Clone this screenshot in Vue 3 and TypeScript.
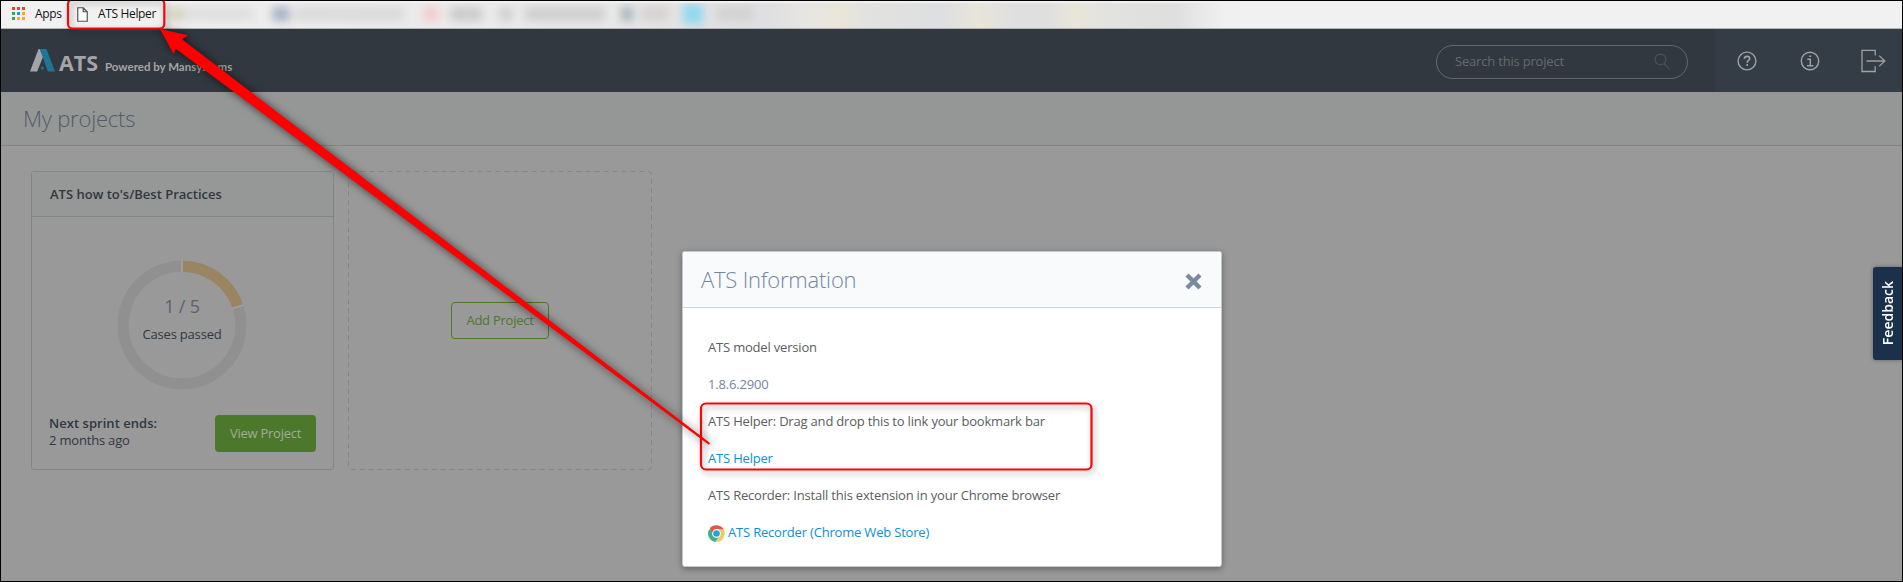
<script setup lang="ts">
interface Smudge { cx: number; w: number; color: string }
interface InfoRow { text: string; kind: 'label' | 'value' | 'link' | 'store' }

const appDots: string[] = ['#ea4335', '#ea4335', '#ea4335', '#34a853', '#2f8af5', '#fbab12', '#34a853', '#fbab12', '#fbab12']

const smudges: Smudge[] = [
  { cx: 177, w: 16, color: '#d6d2b8' },
  { cx: 218, w: 70, color: '#dfdfe0' },
  { cx: 281, w: 17, color: '#a3b1c3' },
  { cx: 350, w: 110, color: '#dadadb' },
  { cx: 431, w: 14, color: '#f5c8c8' },
  { cx: 466, w: 32, color: '#cbcbcb' },
  { cx: 506, w: 14, color: '#d0d0d0' },
  { cx: 565, w: 80, color: '#cfcfd0' },
  { cx: 627, w: 11, color: '#9fb0b8' },
  { cx: 655, w: 28, color: '#d6d1d0' },
  { cx: 735, w: 36, color: '#d2d2d3' },
]

const rows: InfoRow[] = [
  { text: 'ATS model version', kind: 'label' },
  { text: '1.8.6.2900', kind: 'value' },
  { text: 'ATS Helper: Drag and drop this to link your bookmark bar', kind: 'label' },
  { text: 'ATS Helper', kind: 'link' },
  { text: 'ATS Recorder: Install this extension in your Chrome browser', kind: 'label' },
  { text: 'ATS Recorder (Chrome Web Store)', kind: 'store' },
]
</script>

<template>
  <div class="screen">
    <div class="bookmarks">
      <svg class="smudges" width="1240" height="27" viewBox="0 0 1240 27">
        <defs>
          <filter id="soft" filterUnits="userSpaceOnUse" x="160" y="2" width="1080" height="25"><feGaussianBlur stdDeviation="5" /></filter>
          <linearGradient id="strip" x1="0" x2="1">
            <stop offset="0" stop-color="#efeeef" /><stop offset=".4" stop-color="#e9e9e9" />
            <stop offset=".5" stop-color="#e2e2e3" /><stop offset=".56" stop-color="#dfdfe1" />
            <stop offset=".595" stop-color="#e6e5e2" /><stop offset=".628" stop-color="#e9e6d8" />
            <stop offset=".65" stop-color="#e2e2e0" /><stop offset=".725" stop-color="#dedfe0" />
            <stop offset=".755" stop-color="#e8e5d9" /><stop offset=".79" stop-color="#dfdfdf" />
            <stop offset=".82" stop-color="#dfdfdf" /><stop offset=".845" stop-color="#e8e5d9" />
            <stop offset=".88" stop-color="#e2e2e0" /><stop offset=".94" stop-color="#dfdfdf" />
            <stop offset=".985" stop-color="#f0f0f0" />
          </linearGradient>
        </defs>
        <rect x="168" y="2" width="1072" height="25" fill="url(#strip)" />
        <g filter="url(#soft)">
          <rect v-for="s in smudges" :key="s.cx" :x="s.cx - s.w / 2" y="6" :width="s.w" height="14" :fill="s.color" />
          <rect x="683" y="3" width="20" height="20" fill="#8fd8f0" />
        </g>
      </svg>
      <div class="dots"><i v-for="(c, i) in appDots" :key="i" :style="{ background: c }"></i></div>
      <span class="apps">Apps</span>
      <svg class="doc" width="11" height="15" viewBox="0 0 11 15">
        <path d="M.75.75h5.5l4 4v9.5H.75zM6.25.75v4h4" fill="#fafafa" stroke="#555" stroke-width="1.2" />
      </svg>
      <span class="helper">ATS Helper</span>
    </div>

    <header class="topbar">
      <div class="brand">
        <svg width="25" height="23" viewBox="0 0 25 23">
          <path d="M8.5 0h3.3L14 5.2 7.2 22.5H0z" fill="#a3a5a7" />
          <path d="M9.5 0h7L25 22.5h-7.2L12 6.2z" fill="#1f7596" />
          <circle cx="12.3" cy="19" r="1.5" fill="#1f7596" />
        </svg>
        <span class="ats">ATS</span>
        <span class="powered">Powered by Mansystems</span>
      </div>
      <div class="search">
        <span>Search this project</span>
        <svg width="17" height="18" viewBox="0 0 17 18" fill="none" stroke="#4a525a" stroke-width="1.2">
          <circle cx="6.5" cy="6.5" r="5.4" /><path d="M10.3 10.6l5.5 6" />
        </svg>
      </div>
      <div class="tools">
        <svg class="q" width="20" height="20" viewBox="0 0 20 20" fill="none" stroke="#a0a2a4" stroke-width="1.4">
          <circle cx="10" cy="10" r="8.9" />
          <path d="M7.4 7.7c.1-3.2 5.3-3 5.3-.1 0 1.9-2.5 1.9-2.5 4.1M10.2 13.1v1.9" stroke-width="1.6" />
        </svg>
        <svg class="i" width="20" height="20" viewBox="0 0 20 20" fill="none" stroke="#a0a2a4" stroke-width="1.4">
          <circle cx="10" cy="10" r="8.7" />
          <path d="M7.3 8.3h3v6.4M7 14.8h6.4M9.2 5.3h2" />
        </svg>
        <svg class="out" width="25" height="24" viewBox="0 0 25 24" fill="none" stroke="#a0a09c" stroke-width="1.3">
          <path d="M14.2 6.5V1.3H1v21.2h13.2v-5.2M5.5 12h18M18.2 6.6l5.6 5.4-5.6 5.4" />
        </svg>
      </div>
    </header>

    <div class="heading"><h1>My projects</h1></div>

    <main class="projects">
      <section class="card">
        <h2>ATS how to's/Best Practices</h2>
        <div class="chart">
          <svg width="130" height="130" viewBox="0 0 130 130">
            <circle cx="65" cy="65" r="58.8" fill="none" stroke="#909090" stroke-width="11" />
            <circle cx="65" cy="65" r="58.8" fill="none" stroke="#9b8561" stroke-width="11" pathLength="100" stroke-dasharray="20 80" transform="rotate(-90 65 65)" />
            <path d="M65 13V0M114.5 48.9l12.4-4" stroke="#a0a0a0" stroke-width="1.8" />
          </svg>
          <div class="score"><strong>1 / 5</strong><span>Cases passed</span></div>
        </div>
        <footer>
          <p><b>Next sprint ends:</b><br />2 months ago</p>
          <button class="view">View Project</button>
        </footer>
      </section>
      <section class="blank">
        <svg class="dashes" width="304" height="299"><rect x=".5" y=".5" width="303" height="298" rx="3" /></svg>
        <button class="add">Add Project</button>
      </section>
    </main>

    <div class="modal">
      <div class="modal-head">
        <h3>ATS Information</h3>
        <svg width="17" height="17" viewBox="0 0 17 17"><path d="M2 2l13 13M15 2L2 15" stroke="#788ba3" stroke-width="4.4" /></svg>
      </div>
      <div class="modal-body">
        <div v-for="row in rows" :key="row.text" class="row" :class="row.kind">
          <svg v-if="row.kind === 'store'" width="17" height="17" viewBox="0 0 34 34">
            <path d="M17 17L2.3 8.5A17 17 0 0 0 15 34L24 21z" fill="#3fb192" />
            <path d="M24 21L15.5 34A17 17 0 0 0 32 10H17z" fill="#f2cb61" />
            <path d="M3.5 6.5A17 17 0 0 1 31.5 9H17L9.5 18z" fill="#e0574a" />
            <circle cx="17" cy="17" r="8.8" fill="#fff" /><circle cx="17" cy="17" r="6.6" fill="#2aa3d8" />
          </svg>
          <span>{{ row.text }}</span>
        </div>
      </div>
    </div>

    <div class="feedback"><span>Feedback</span></div>

    <svg class="marks" width="1903" height="582" viewBox="0 0 1903 582">
      <g class="boxes" fill="none" stroke="#f60808" stroke-width="2.2">
        <rect x="68" y="-.5" width="96.3" height="29" rx="4.5" />
        <rect x="701" y="403.5" width="390.5" height="66" rx="5" />
      </g>
      <path class="arrow" d="M160 29L188 35.2L182 39.3L710 443L708.8 444.8L175.7 48.7L173.7 54.2z" fill="#f00" />
    </svg>
    <div class="frame"></div>
  </div>
</template>

<style>
html, body { margin: 0; overflow: hidden; background: #999; }
</style>

<style scoped>
.screen { position: relative; width: 1903px; height: 582px; overflow: hidden; background: #999; font-family: "Open Sans", "Noto Sans", sans-serif; font-size: 13px; line-height: 18px; letter-spacing: -.19px; color: #31373f; }
.frame { position: absolute; inset: 0; border: 1px solid #000; }
.marks { position: absolute; left: 0; top: 0; }
.boxes { filter: drop-shadow(2px 3px 3px rgba(0, 0, 0, .35)); }
.arrow { filter: drop-shadow(1px 1px 4px rgba(0, 0, 0, .65)); }

.bookmarks { position: relative; box-sizing: border-box; height: 29px; padding: 0 0 4px 12px; border-bottom: 1px solid #b5b4b6; background: #f2f1f2; display: flex; align-items: center; font-size: 12px; color: #111; }
.smudges { position: absolute; left: 0; top: 1px; }
.dots { display: grid; grid-template-columns: repeat(3, 3px); gap: 2px; margin-top: 3px; }
.dots i { width: 3px; height: 3px; }
.apps { margin-left: 10px; width: 42px; margin-top: 3px; letter-spacing: -.3px; }
.doc { position: relative; margin-top: 4px; }
.helper { position: relative; margin: 3px 0 0 10px; letter-spacing: -.35px; }

.topbar { height: 63px; background: #31383f; display: flex; }
.brand { width: 1436px; padding-left: 30px; box-sizing: border-box; display: flex; align-items: flex-start; color: #a3a5a7; letter-spacing: 0; }
.brand svg { margin-top: 20px; }
.ats { margin: 20px 0 0 4px; font-size: 21.5px; line-height: 28px; font-weight: 700; width: 46px; }
.powered { margin-top: 28px; font-family: Lato, sans-serif; font-weight: 700; font-size: 11.5px; line-height: 20px; }
.search { box-sizing: border-box; width: 252px; height: 34px; margin-top: 16px; padding: 0 16px 2px 18px; border: 1px solid #62686e; border-radius: 17px; display: flex; align-items: center; justify-content: space-between; color: #666a6c; }
.search svg { margin-top: 2px; }
.tools { margin-left: 27px; flex: 1; background: #343d46; display: flex; align-items: flex-start; }
.q { margin: 22px 0 0 22px; }
.i { margin: 22px 0 0 43px; }
.out { margin: 20px 0 0 41px; }

.heading { height: 53px; border-bottom: 1px solid #828384; background: #959796; padding-left: 23px; display: flex; align-items: center; }
h1, h3 { margin: -2px 0 0; font-weight: 300; font-size: 22px; line-height: 30px; letter-spacing: -.2px; }
h1 { color: #535b67; }

.projects { display: flex; gap: 14px; padding: 25px 0 0 31px; }
.card { box-sizing: border-box; width: 303px; height: 299px; border: 1px solid #848586; border-radius: 3px; }
h2 { margin: 0; height: 44px; line-height: 44px; padding-left: 18px; font-size: 13px; font-weight: 600; letter-spacing: 0; background: #959896; border-bottom: 1px solid #848586; }
.chart { position: relative; width: 130px; height: 130px; margin: 43px 0 0 85px; }
.chart > svg { display: block; }
.score { position: absolute; inset: 0; display: flex; flex-direction: column; align-items: center; }
.score strong { margin-top: 33px; font-size: 18px; line-height: 26px; font-weight: 400; color: #5a626e; }
.score span { margin-top: 5px; line-height: 20px; }
.card footer { display: flex; justify-content: space-between; padding: 25px 17px 0 17px; }
.card p { margin: 0; line-height: 17px; }
.card b { font-weight: 600; letter-spacing: .04px; }
button { box-sizing: border-box; height: 37px; padding: 0 0 1px; font: inherit; letter-spacing: -.25px; border-radius: 4px; }
.view { width: 101px; border: 0; background: #4b782b; color: #a3ab9d; }
.blank { position: relative; width: 304px; height: 299px; display: flex; justify-content: center; align-items: center; }
.dashes { position: absolute; inset: 0; }
.dashes rect { fill: none; stroke: #848586; stroke-dasharray: 5 4; }
.add { position: relative; width: 98px; border: 1px solid #4b782b; background: none; color: #4b782b; }

.modal { position: absolute; left: 682px; top: 251px; box-sizing: border-box; width: 540px; height: 316px; background: #fff; border: 1px solid #c5c9cc; border-radius: 3px; box-shadow: 0 2px 6px rgba(0, 0, 0, .35); }
.modal-head { height: 55px; background: #f9fafc; border-bottom: 1px solid #ced3d8; display: flex; justify-content: space-between; align-items: center; padding: 0 19px 0 18px; }
.modal-head h3 { color: #74879f; }
.modal-head svg { margin-top: 4px; }
.modal-body { padding: 20.5px 0 0 25px; }
.row { height: 37px; display: flex; align-items: center; gap: 3px; color: #5b5d60; white-space: nowrap; }
.row svg { margin-top: 2px; }
.value { color: #74849a; }
.link, .store { color: #0e8fd8; }

.feedback { position: absolute; left: 1873px; top: 267px; width: 30px; height: 93px; border-radius: 3px 0 0 3px; background: #1b304b; box-shadow: 0 0 4px rgba(0, 0, 0, .35); display: flex; align-items: center; justify-content: center; }
.feedback span { writing-mode: vertical-rl; transform: rotate(180deg); color: #fff; font-weight: 600; font-size: 14px; letter-spacing: 0; }
</style>
